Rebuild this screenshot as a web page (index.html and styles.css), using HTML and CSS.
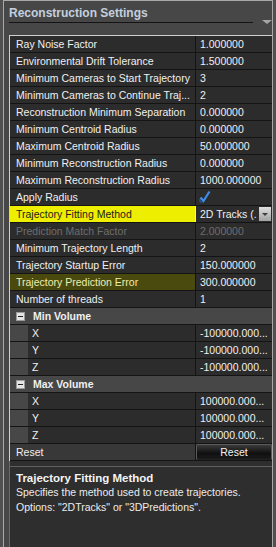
FILE: index.html
```html
<!DOCTYPE html>
<html lang="en">
<head>
    <meta charset="UTF-8">
    <meta name="viewport" content="width=device-width, initial-scale=1.0">
    <title>Reconstruction Settings</title>
    <link rel="stylesheet" href="styles.css">
</head>
<body>
    <div class="frame">
        <div class="pane-head">
            <div class="pane-title">Reconstruction Settings</div>
            <span class="pane-arrow"></span>
        </div>

        <div class="grid">
            <div class="row"><div class="name">Ray Noise Factor</div><div class="val">1.000000</div></div>
            <div class="row"><div class="name">Environmental Drift Tolerance</div><div class="val">1.500000</div></div>
            <div class="row"><div class="name">Minimum Cameras to Start Trajectory</div><div class="val">3</div></div>
            <div class="row"><div class="name">Minimum Cameras to Continue Traj...</div><div class="val">2</div></div>
            <div class="row"><div class="name">Reconstruction Minimum Separation</div><div class="val">0.000000</div></div>
            <div class="row"><div class="name">Minimum Centroid Radius</div><div class="val">0.000000</div></div>
            <div class="row"><div class="name">Maximum Centroid Radius</div><div class="val">50.000000</div></div>
            <div class="row"><div class="name">Minimum Reconstruction Radius</div><div class="val">0.000000</div></div>
            <div class="row"><div class="name">Maximum Reconstruction Radius</div><div class="val">1000.000000</div></div>
            <div class="row">
                <div class="name">Apply Radius</div>
                <div class="val">
                    <svg class="check" width="12" height="13" viewBox="0 0 12 13">
                        <path d="M1.5 7.5 L4.5 11 L10.5 1.5" fill="none" stroke="#3d8ee8" stroke-width="2.2"/>
                        <path d="M1 9 V12 H4" fill="none" stroke="#2a5fa8" stroke-width="1"/>
                    </svg>
                </div>
            </div>
            <div class="row">
                <div class="name marked">Trajectory Fitting Method</div>
                <div class="val editing"><span class="val-text">2D Tracks (.</span><span class="drop-btn"></span></div>
            </div>
            <div class="row disabled"><div class="name">Prediction Match Factor</div><div class="val">2.000000</div></div>
            <div class="row"><div class="name">Minimum Trajectory Length</div><div class="val">2</div></div>
            <div class="row"><div class="name">Trajectory Startup Error</div><div class="val">150.000000</div></div>
            <div class="row"><div class="name hilite">Trajectory Prediction Error</div><div class="val">300.000000</div></div>
            <div class="row"><div class="name">Number of threads</div><div class="val">1</div></div>

            <div class="row group"><span class="toggle"></span>Min Volume</div>
            <div class="row sub"><div class="name">X</div><div class="val">-100000.000...</div></div>
            <div class="row sub"><div class="name">Y</div><div class="val">-100000.000...</div></div>
            <div class="row sub"><div class="name">Z</div><div class="val">-100000.000...</div></div>

            <div class="row group"><span class="toggle"></span>Max Volume</div>
            <div class="row sub"><div class="name">X</div><div class="val">100000.000...</div></div>
            <div class="row sub"><div class="name">Y</div><div class="val">100000.000...</div></div>
            <div class="row sub"><div class="name">Z</div><div class="val">100000.000...</div></div>

            <div class="row reset-row">
                <div class="name">Reset</div>
                <div class="val"><button class="reset-btn">Reset</button></div>
            </div>
        </div>

        <div class="help">
            <div class="help-body">
                <h4>Trajectory Fitting Method</h4>
                <p>Specifies the method used to create trajectories.<br>Options: "2DTracks" or "3DPredictions".</p>
            </div>
        </div>
    </div>
</body>
</html>
```

FILE: styles.css
```css
* {
    margin: 0;
    padding: 0;
    box-sizing: border-box;
}

body {
    font-family: "Liberation Sans", Arial, sans-serif;
    font-size: 10.5px;
    background: #505050;
    color: #f0f0f0;
    width: 276px;
    height: 547px;
    overflow: hidden;
}

.frame {
    margin-left: 3px;
    width: 270px;
    height: 547px;
    background: #474747;
    border: 1px solid #a8a8a8;
    border-bottom: none;
    display: flex;
    flex-direction: column;
}

/* header of the pane */
.pane-head {
    height: 34px;
    display: flex;
    flex-shrink: 0;
}

.pane-title {
    margin-left: 5px;
    width: 244px;
    height: 22px;
    padding-top: 5px;
    font-size: 12px;
    font-weight: bold;
    line-height: 14px;
    color: #c4cfdf;
    border-bottom: 1px solid #141414;
}

.pane-arrow {
    margin: 19px 0 0 9px;
    width: 0;
    height: 0;
    border-left: 5px solid transparent;
    border-right: 5px solid transparent;
    border-top: 4px solid #a6a6a6;
}

/* property grid */
.grid {
    margin-left: 5px;
    width: 263px;
    border-left: 1px solid #cfcfcf;
    border-top: 1px solid #cfcfcf;
    flex-shrink: 0;
}

.row {
    display: flex;
    height: 17px;
    line-height: 16px;
    border-bottom: 1px solid #141414;
    background: #2c2c2c;
    white-space: nowrap;
}

.name {
    width: 186px;
    padding-left: 6px;
    border-right: 1px solid #141414;
    overflow: hidden;
}

.val {
    flex: 1;
    padding-left: 4px;
    display: flex;
    align-items: center;
    overflow: hidden;
}

.check {
    margin: -2px 0 0 -1px;
}

.name.marked {
    background: #eeee00;
    color: #1b1b1b;
}

.name.hilite {
    background: #4a4a0e;
    color: #ededb0;
}

.val.editing {
    border-left: 1px solid #e8e8e8;
    margin-left: -1px;
    padding-right: 1px;
}

.val-text {
    flex: 1;
}

.drop-btn {
    width: 12px;
    height: 14px;
    background: linear-gradient(#dedede, #a2a2a2);
    display: flex;
    align-items: center;
    justify-content: center;
}

.drop-btn::after {
    content: "";
    border-left: 3px solid transparent;
    border-right: 3px solid transparent;
    border-top: 3px solid #3c3c3c;
}

.row.disabled {
    color: #6e6e6e;
}

.row.group {
    background: #474747;
    font-weight: bold;
    align-items: center;
    padding-left: 6px;
    gap: 8px;
}

.toggle {
    width: 9px;
    height: 9px;
    background: #e4e4e4;
    border: 1px solid #9a9a9a;
    display: flex;
    align-items: center;
    justify-content: center;
}

.toggle::after {
    content: "";
    width: 5px;
    height: 1px;
    background: #202020;
}

.row.sub {
    padding-left: 18px;
    background: #474747;
}

.row.sub .name {
    width: 168px;
    padding-left: 4px;
    background: #2c2c2c;
}

.row.sub .val {
    background: #2c2c2c;
}

.row.reset-row {
    background: #383838;
}

.reset-row .val {
    padding: 0;
}

.reset-btn {
    width: 100%;
    height: 16px;
    font-family: inherit;
    font-size: 10.5px;
    color: #f4f4f4;
    background: linear-gradient(#3a3a3a, #101010 60%, #1a1a1a);
    border: 1px solid #5a5a5a;
    border-bottom-color: #222;
    border-radius: 2px;
}

/* help box at the bottom */
.help {
    margin-left: 5px;
    flex: 1;
    background: #2e2e2e;
    border-left: 1px solid #6a6a6a;
    padding-top: 5px;
}

.help-body {
    height: 100%;
    border-top: 1px solid #606060;
    padding: 4px 6px;
}

.help h4 {
    font-size: 11.5px;
    line-height: 14px;
    color: #f4f4f4;
}

.help p {
    line-height: 15px;
    color: #ececec;
}
```
